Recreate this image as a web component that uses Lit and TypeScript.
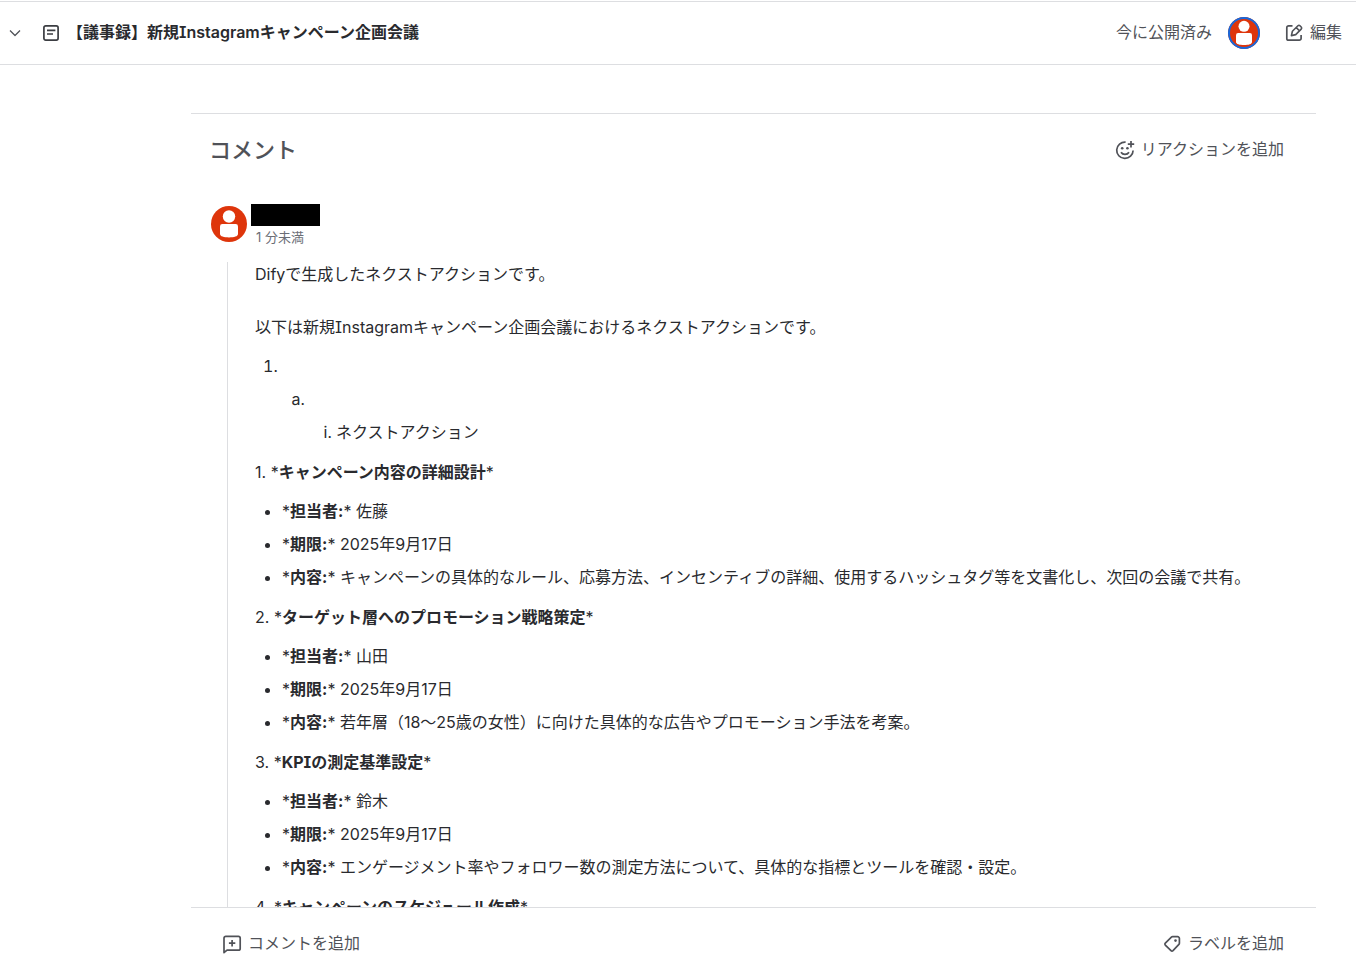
import { LitElement, html, css, svg } from "lit";
import { customElement, property } from "lit/decorators.js";

interface Task {
  title: string;
  owner: string;
  due: string;
  body: string;
}

const TASKS: Task[] = [
  {
    title: "キャンペーン内容の詳細設計",
    owner: "佐藤",
    due: "2025年9月17日",
    body: "キャンペーンの具体的なルール、応募方法、インセンティブの詳細、使用するハッシュタグ等を文書化し、次回の会議で共有。",
  },
  {
    title: "ターゲット層へのプロモーション戦略策定",
    owner: "山田",
    due: "2025年9月17日",
    body: "若年層（18～25歳の女性）に向けた具体的な広告やプロモーション手法を考案。",
  },
  {
    title: "KPIの測定基準設定",
    owner: "鈴木",
    due: "2025年9月17日",
    body: "エンゲージメント率やフォロワー数の測定方法について、具体的な指標とツールを確認・設定。",
  },
];

const ICONS = {
  chevron: svg`<path d="M5 7.5 10 12.5 15 7.5" stroke-width="1.3" />`,
  page: svg`<rect x="2.900" y="2.900" width="14.200" height="14.200" rx="1.800" /><path d="M6 7.300h8.400M6 11h6" />`,
  edit: svg`<path d="M8.5 2.900H4.600A1.800 1.800 0 0 0 2.800 4.700v10.700a1.800 1.800 0 0 0 1.800 1.800h10.700a1.800 1.800 0 0 0 1.800-1.800V12" /><path d="M7.400 12.600l1-4.300 5.500-5.500a1.500 1.500 0 0 1 2.100 0l1.200 1.200a1.500 1.500 0 0 1 0 2.100l-5.500 5.500zM12.300 4.600l3.100 3.100" stroke-width="1.600" />`,
  reaction: svg`<path d="M10.600 2.100A8.200 8.200 0 1 0 18.100 10.400" /><path d="M6 12.200a4.700 4.700 0 0 0 8 0" /><path d="M16 1v6.400M12.800 4.200h6.400" /><circle cx="7.200" cy="8.300" r="1.300" fill="currentColor" stroke="none" /><circle cx="12.400" cy="8.300" r="1.300" fill="currentColor" stroke="none" />`,
  comment: svg`<path d="M2 18.600V4.200a1.800 1.800 0 0 1 1.800-1.800h12.600a1.800 1.800 0 0 1 1.800 1.800v10.200a1.800 1.800 0 0 1-1.800 1.800H5z" /><path d="M10.100 6v6.400M6.900 9.200h6.400" />`,
  label: svg`<path d="M10.600 2.700h5a1.800 1.800 0 0 1 1.800 1.800v4.700a1.800 1.800 0 0 1-.5 1.200l-5.900 6.300a1.400 1.400 0 0 1-2 0l-5.700-5.600a1.400 1.400 0 0 1 0-2l6.100-5.900a1.800 1.800 0 0 1 1.200-.5z" /><circle cx="13.500" cy="6.600" r="1.300" fill="currentColor" stroke="none" />`,
};

@customElement("ui-icon")
class UiIcon extends LitElement {
  @property() name: keyof typeof ICONS = "page";

  static styles = css`
    :host {
      display: block;
      flex: none;
      width: 20px;
      height: 20px;
    }
    .icon {
      display: block;
      width: 100%;
      height: 100%;
      fill: none;
      stroke: currentColor;
      stroke-width: 1.7;
      stroke-linejoin: round;
    }
  `;

  render() {
    return html`<svg class="icon" viewBox="0 0 20 20" aria-hidden="true">${ICONS[this.name]}</svg>`;
  }
}

@customElement("user-avatar")
class UserAvatar extends LitElement {
  static styles = css`
    :host {
      display: block;
      flex: none;
      border-radius: 50%;
      background: #de350b;
    }
    .figure {
      display: block;
      width: 100%;
      height: 100%;
    }
  `;

  render() {
    return html`<svg class="figure" viewBox="0 0 36 36" aria-hidden="true">
      <circle cx="18" cy="10.500" r="6.200" fill="#fff" />
      <path d="M9 20.400a2.400 2.400 0 0 1 2.400-2.400h13.200a2.400 2.400 0 0 1 2.400 2.400v7.600c0 2.400-4 3.400-9 3.400s-9-1-9-3.400z" fill="#fff" />
    </svg>`;
  }
}

@customElement("app-root")
class AppRoot extends LitElement {
  static styles = css`
    :host {
      display: flex;
      flex-direction: column;
      height: 100vh;
      box-sizing: border-box;
      padding-top: 1px;
      background: #fff;
      color: #292a2e;
      font: 400 16px/24px Inter, "Noto Sans CJK JP", sans-serif;
      font-feature-settings: "cv08";
    }
    button {
      display: flex;
      align-items: center;
      gap: 6px;
      padding: 0;
      border: 0;
      background: none;
      color: #505258;
      font: inherit;
      font-feature-settings: inherit;
      cursor: pointer;
    }
    .text {
      padding-bottom: 2px;
    }
    .topbar {
      display: flex;
      align-items: center;
      flex: none;
      height: 62px;
      padding: 0 14px 0 5px;
      border-top: 1px solid #dddee1;
      border-bottom: 1px solid #dddee1;
    }
    .page-icon {
      margin-left: 16px;
      color: #3b3d42;
    }
    .title {
      flex: 1;
      margin: 0 0 0 6px;
      font-size: 16px;
      font-weight: 600;
    }
    .status {
      margin-right: 16px;
      color: #505258;
    }
    .me {
      width: 32px;
      height: 32px;
      margin-right: 24px;
      outline: 2px solid #1868db;
      outline-offset: -2px;
    }
    .scroll {
      flex: 1;
      min-height: 0;
      overflow-y: auto;
      scrollbar-width: none;
      padding: 48px 40px 0 191px;
    }
    .section-head {
      display: flex;
      align-items: center;
      justify-content: space-between;
      padding: 20px 32px 20px 18px;
      border-top: 1px solid #dddee1;
    }
    .section-title {
      margin: 0;
      color: #505258;
      font-size: 22px;
      line-height: 32px;
      font-weight: 500;
    }
    .author {
      display: flex;
      align-items: flex-start;
      gap: 4px;
      padding: 18px 0 14px 20px;
    }
    .author-photo {
      width: 36px;
      height: 36px;
      margin-top: 2px;
    }
    .redacted {
      width: 69px;
      height: 22px;
      background: #000;
    }
    .time {
      display: block;
      padding-left: 5px;
      color: #6b6e76;
      font-size: 13px;
      line-height: 22px;
    }
    .comment {
      margin-left: 36px;
      padding-left: 27px;
      border-left: 1px solid #dddee1;
    }
    .comment p {
      margin: 0;
      padding-top: 16px;
    }
    .comment .lead {
      padding: 0 0 13px;
    }
    .comment ul,
    .comment ol {
      margin: 0;
      padding: 15px 0 0 27px;
    }
    .comment li + li,
    .comment ol ol {
      padding-top: 9px;
    }
    .alpha {
      list-style-type: lower-alpha;
    }
    .roman {
      list-style-type: lower-roman;
    }
    .footer {
      display: flex;
      align-items: center;
      justify-content: space-between;
      flex: none;
      margin: 0 40px 0 191px;
      padding: 23px 32px 5px 31px;
      border-top: 1px solid #dddee1;
    }
  `;

  private field(label: string, value: string) {
    return html`<li>*<strong>${label}:</strong>* ${value}</li>`;
  }

  render() {
    return html`
      <header class="topbar">
        <button aria-label="展開"><ui-icon name="chevron"></ui-icon></button>
        <ui-icon class="page-icon" name="page"></ui-icon>
        <h1 class="title text">【議事録】新規Instagramキャンペーン企画会議</h1>
        <span class="status text">今に公開済み</span>
        <user-avatar class="me"></user-avatar>
        <button><ui-icon name="edit"></ui-icon><span class="text">編集</span></button>
      </header>
      <main class="scroll">
        <div class="section-head">
          <h2 class="section-title">コメント</h2>
          <button><ui-icon name="reaction"></ui-icon><span class="text">リアクションを追加</span></button>
        </div>
        <div class="author">
          <user-avatar class="author-photo"></user-avatar>
          <div>
            <div class="redacted"></div>
            <span class="time">1 分未満</span>
          </div>
        </div>
        <article class="comment">
          <p class="lead">Difyで生成したネクストアクションです。</p>
          <p>以下は新規Instagramキャンペーン企画会議におけるネクストアクションです。</p>
          <ol>
            <li>
              <br />
              <ol class="alpha">
                <li>
                  <br />
                  <ol class="roman">
                    <li>ネクストアクション</li>
                  </ol>
                </li>
              </ol>
            </li>
          </ol>
          ${TASKS.map(
            (t, i) => html`
              <p>${i + 1}. *<strong>${t.title}</strong>*</p>
              <ul>
                ${this.field("担当者", t.owner)} ${this.field("期限", t.due)} ${this.field("内容", t.body)}
              </ul>
            `
          )}
          <p>4. *<strong>キャンペーンのスケジュール作成</strong>*</p>
        </article>
      </main>
      <footer class="footer">
        <button><ui-icon name="comment"></ui-icon><span class="text">コメントを追加</span></button>
        <button><ui-icon name="label"></ui-icon><span class="text">ラベルを追加</span></button>
      </footer>
    `;
  }
}
